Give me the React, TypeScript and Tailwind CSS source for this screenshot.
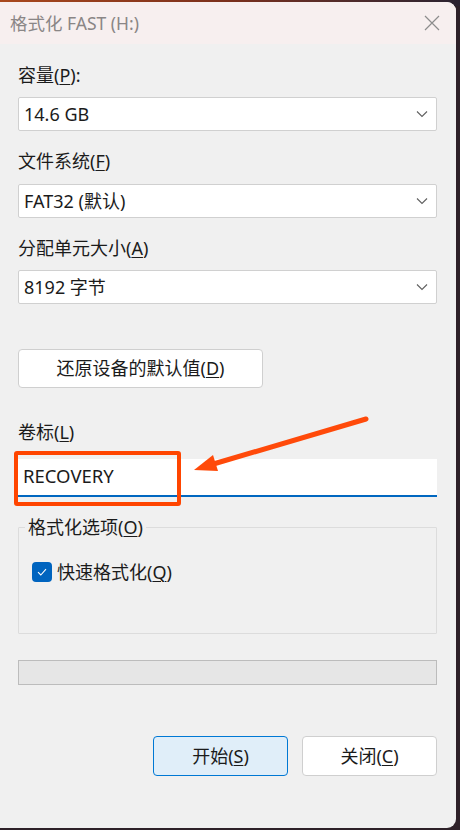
import { ReactNode } from "react";

const font = { fontFamily: '"Noto Sans", "Noto Sans CJK SC", sans-serif' };

function Key({ k }: { k: string }) {
  return <span className="underline underline-offset-2 decoration-1">{k}</span>;
}

function Chevron() {
  return (
    <svg width="12" height="8" viewBox="0 0 12 8" className="mr-[8px]">
      <path d="M1 1.5 L6 6.5 L11 1.5" fill="none" stroke="#5f5f5f" strokeWidth="1.1" />
    </svg>
  );
}

function Select({ value, className }: { value: string; className?: string }) {
  return (
    <div
      className={
        "h-[34px] flex items-center justify-between bg-white border border-[#d0d0d0] rounded-[2px] pl-[5px] text-[18px] text-[#1b1b1b] " +
        (className ?? "")
      }
    >
      <span>{value}</span>
      <Chevron />
    </div>
  );
}

function Label({ children, className }: { children: ReactNode; className?: string }) {
  return <div className={"h-[24px] leading-[24px] text-[18px] text-[#1b1b1b] " + (className ?? "")}>{children}</div>;
}

export default function App() {
  return (
    <div
      className="relative w-[460px] h-[830px] overflow-hidden bg-[#2e2129] pt-[2px]"
      style={font}
    >
      <div className="absolute top-0 left-0 w-[460px] h-[6px] bg-gradient-to-r from-[#a9481d] via-[#7a2f1b] to-[#2a2230]" />
      <div className="relative w-[456px] h-[826px] bg-[#f0f0f0] rounded-tr-[9px] rounded-br-[9px] overflow-hidden">
        {/* title bar */}
        <div className="h-[42px] bg-[#f7efef] flex items-center justify-between pl-[10px] pr-[16px]">
          <span className="text-[17.5px] text-[#8a8686]">格式化 FAST (H:)</span>
          <svg width="16" height="16" viewBox="0 0 16 16">
            <path d="M1 1 L15 15 M15 1 L1 15" stroke="#8c8c8c" strokeWidth="1.2" />
          </svg>
        </div>

        <div className="pl-[18px] pr-[19px] flex flex-col">
          <Label className="mt-[19px]">
            容量(<Key k="P" />):
          </Label>
          <Select value="14.6 GB" className="mt-[10px]" />

          <Label className="mt-[18px]">
            文件系统(<Key k="F" />)
          </Label>
          <Select value="FAT32 (默认)" className="mt-[11px]" />

          <Label className="mt-[18px]">
            分配单元大小(<Key k="A" />)
          </Label>
          <Select value="8192 字节" className="mt-[10px]" />

          <button className="mt-[45px] w-[245px] h-[39px] bg-white border border-[#cfcfcf] rounded-[4px] text-[18px] text-[#1b1b1b]">
            还原设备的默认值(<Key k="D" />)
          </button>

          <Label className="mt-[32px]">
            卷标(<Key k="L" />)
          </Label>
          <div className="mt-[15px] h-[38px] bg-white border-b-2 border-[#0067c0] flex items-center pl-[5px] pb-[3px] text-[18.5px] text-[#1b1b1b]">
            RECOVERY
          </div>

          <fieldset className="mt-[18px] h-[119px] border border-[#dcdcdc] rounded-[1px]">
            <legend className="ml-[6px] px-[3px] h-[24px] leading-[24px] text-[18px] text-[#1b1b1b]">
              格式化选项(<Key k="O" />)
            </legend>
            <div className="mt-[21px] ml-[13px] flex items-center gap-[5px]">
              <div className="w-[20px] h-[20px] rounded-[4px] bg-[#0064bf] flex items-center justify-center">
                <svg width="12" height="10" viewBox="0 0 12 10">
                  <path d="M2 5.2 L4.8 8 L10 2.2" fill="none" stroke="white" strokeWidth="1.1" />
                </svg>
              </div>
              <span className="text-[18px] leading-[24px] text-[#1b1b1b]">
                快速格式化(<Key k="Q" />)
              </span>
            </div>
          </fieldset>

          <div className="mt-[26px] h-[25px] bg-[#e6e6e6] border border-[#bcbcbc]" />

          <div className="mt-[51px] flex justify-end gap-[14px]">
            <button className="w-[135px] h-[40px] bg-[#e0eef9] border border-[#0078d4] rounded-[4px] text-[18px] text-[#1b1b1b]">
              开始(<Key k="S" />)
            </button>
            <button className="w-[135px] h-[40px] bg-white border border-[#cfcfcf] rounded-[4px] text-[18px] text-[#1b1b1b]">
              关闭(<Key k="C" />)
            </button>
          </div>
        </div>
      </div>

      {/* annotation overlay */}
      <div className="absolute left-[14px] top-[451px] w-[167px] h-[55px] border-4 border-[#ff4500] rounded-[3px]" />
      <svg className="absolute left-0 top-0 pointer-events-none" width="460" height="830">
        <path d="M366 419 L210 465" stroke="#ff4a0a" strokeWidth="5" strokeLinecap="round" />
        <path d="M194 470 L213 455 L218 471 Z" fill="#ff4a0a" />
      </svg>
    </div>
  );
}
